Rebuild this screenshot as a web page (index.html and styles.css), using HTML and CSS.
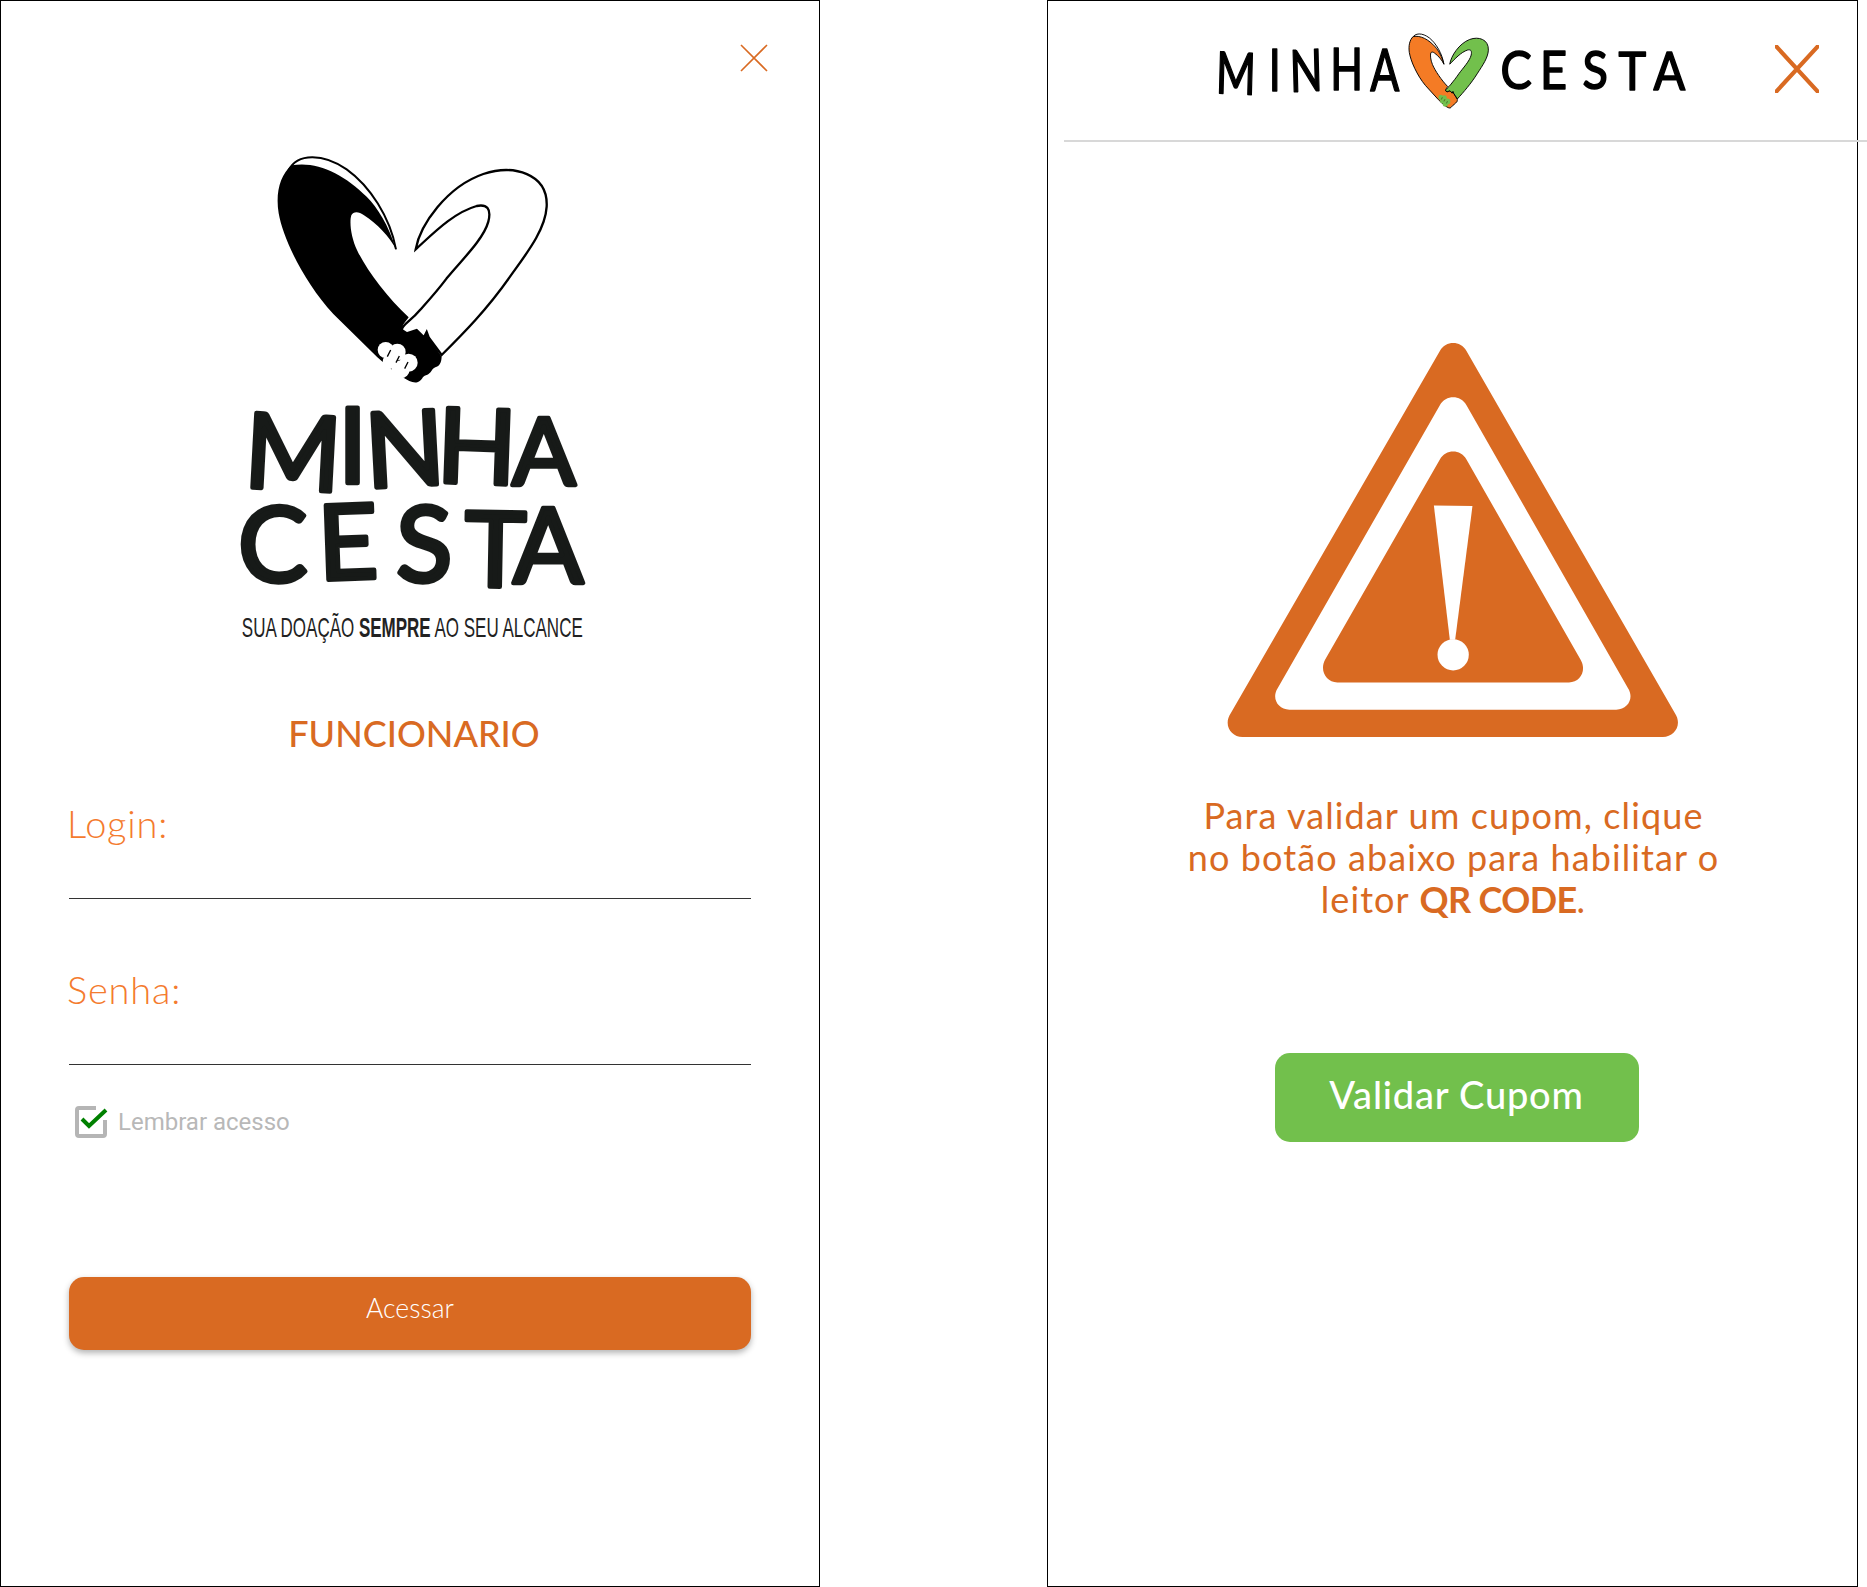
FILE: index.html
```html
<!DOCTYPE html>
<html lang="pt-BR">
<head>
    <meta charset="UTF-8">
    <meta name="viewport" content="width=device-width, initial-scale=1.0">
    <title>Minha Cesta</title>
    <link rel="stylesheet" href="styles.css">
</head>
<body>

<svg class="defs" width="0" height="0" aria-hidden="true">
    <defs>
        <symbol id="heart" viewBox="0 0 1200 840" preserveAspectRatio="none">
            <!-- outline above the left arm -->
            <path class="heart-line" d="M205 122 C232 68 310 70 380 118 C450 168 510 262 528 358"/>
            <!-- left arm -->
            <path class="heart-left" d="M528 358 C506 285 472 232 440 200 C372 132 290 92 215 106 C180 135 166 190 176 250 C190 330 255 460 340 552 L472 682 L510 715 L548 742 C565 752 578 760 592 757 C608 752 606 738 618 736 C636 730 634 716 646 712 C664 706 664 690 665 680 L626 622 L620 606 L612 622 L590 600 L560 610 L545 600 C546 586 556 576 566 562 C500 500 440 420 412 362 C392 320 388 275 394 256 C400 244 416 244 432 256 C470 280 510 322 528 358 Z"/>
            <!-- right arm -->
            <path class="heart-right" d="M587 358 C600 285 680 170 790 132 C880 102 985 130 980 230 C976 300 920 370 870 440 C800 540 730 610 665 675 L626 622 L620 606 L612 622 L590 600 L560 610 L545 600 C548 582 570 576 600 540 C625 512 650 485 680 445 C720 395 790 330 805 275 C815 235 800 222 770 228 C700 248 640 310 587 358 Z"/>
            <!-- fingers -->
            <g class="heart-fingers">
                <circle cx="497" cy="660" r="24"/>
                <circle cx="532" cy="666" r="25"/>
                <circle cx="566" cy="698" r="27"/>
                <circle cx="542" cy="718" r="27"/>
                <circle cx="510" cy="695" r="22"/>
            </g>
            <path class="heart-knuckle" d="M502 680 L512 660 M528 698 L538 678 M554 716 L564 696"/>
        </symbol>
        <symbol id="close" viewBox="0 0 28 28" preserveAspectRatio="none">
            <path d="M1 1 L27 27 M27 1 L1 27"/>
        </symbol>
    </defs>
</svg>

<!-- Tela de login -->
<section class="panel panel-login">
    <svg class="close-small"><use href="#close"/></svg>

    <svg class="logo-big" viewBox="0 0 400 520" role="img" aria-label="Minha Cesta">
        <use href="#heart" width="400" height="280"/>
        <text class="mark-big" x="23 118 147 216 292" y="357 353 358 352 355" rotate="3 0 -3 2 0">MINH<tspan class="mark-big-a">A</tspan></text>
        <text class="mark-big" x="18 99 176 244 293" y="452 450 452 456 453" rotate="0 -2 0 1 0">CESTA</text>
        <g transform="scale(.607 1)">
            <text class="slogan" x="36" y="507">SUA DOAÇÃO <tspan class="slogan-bold">SEMPRE</tspan> AO SEU ALCANCE</text>
        </g>
    </svg>

    <h2 class="title">FUNCIONARIO</h2>

    <form class="form">
        <div class="field">
            <label class="field-label" for="login">Login:</label>
            <input class="field-input" id="login" type="text">
        </div>
        <div class="field">
            <label class="field-label" for="senha">Senha:</label>
            <input class="field-input" id="senha" type="password">
        </div>
        <div class="remember">
            <svg class="remember-box" viewBox="0 0 34 34">
                <path class="remember-frame" d="M22 3 H5 Q3 3 3 5 V29 Q3 31 5 31 H29 Q31 31 31 29 V15"/>
                <path class="remember-check" d="M8 14 L15 21 L32 5"/>
            </svg>
            <span>Lembrar acesso</span>
        </div>
        <button class="btn-access" type="button">Acessar</button>
    </form>
</section>

<!-- Tela de validar cupom -->
<section class="panel panel-coupon">
    <header class="coupon-header">
        <svg class="logo-small" viewBox="0 0 470 76" role="img" aria-label="Minha Cesta">
            <g transform="scale(.74 1)">
                <text class="mark-small" x="-2 70 99 153 207" y="61 59 60 58 59" rotate="2 0 -2 0 0">MINHA</text>
            </g>
            <g transform="scale(.9 1)">
                <text class="mark-small mark-small-b" x="315 359 406 446 485" y="57 57 57 58 58">CESTA</text>
            </g>
            <use class="heart-color" href="#heart" x="175" y="-7" width="118" height="92"/>
        </svg>
        <svg class="close-large"><use href="#close"/></svg>
    </header>

    <div class="coupon-body">
        <svg class="warning" viewBox="52 38 1355 1184">
            <path class="warning-fill" d="M690 62 C708 30 752 30 770 62 L1396 1150 C1420 1185 1395 1222 1360 1222 L97 1222 C62 1222 38 1185 62 1150 Z"/>
            <path class="warning-gap" d="M690 225 C708 193 752 193 770 225 L1255 1075 C1275 1105 1255 1140 1220 1140 L238 1140 C203 1140 183 1105 203 1075 Z"/>
            <path class="warning-fill" d="M690 388 C708 356 752 356 770 388 L1113 990 C1132 1022 1112 1058 1078 1058 L382 1058 C348 1058 328 1022 345 990 Z"/>
            <path class="warning-gap" d="M672 526 L788 528 L736 930 L720 930 Z"/>
            <circle class="warning-gap" cx="730" cy="975" r="47"/>
        </svg>

        <p class="coupon-text">Para validar um cupom, clique<br>no botão abaixo para habilitar o<br>leitor <strong>QR CODE</strong>.</p>

        <button class="btn-validate" type="button">Validar Cupom</button>
    </div>
</section>

</body>
</html>
```

FILE: styles.css
```css
html, body {
    margin: 0;
    padding: 0;
    height: 100%;
    background-color: #ffffff;
}

body {
    display: flex;
    align-items: flex-start;
    gap: 227px;
    width: 1867px;
    height: 1587px;
    overflow: hidden;
    font-family: Lato, Arial, sans-serif;
    color: #d96a22;
}

.defs {
    position: absolute;
}

.panel {
    box-sizing: border-box;
    height: 1587px;
    border: 1px solid #000000;
    display: flex;
    flex-direction: column;
}

/* coracao do logo */
.heart-line {
    fill: none;
    stroke: #000000;
    stroke-width: var(--heart-stroke, 6);
}

.heart-left {
    fill: var(--arm-left, #000000);
    stroke: var(--arm-left-line, none);
    stroke-width: var(--heart-stroke, 6);
}

.heart-right {
    fill: var(--arm-right, #ffffff);
    stroke: #000000;
    stroke-width: var(--heart-stroke, 7);
}

.heart-fingers {
    fill: var(--fingers, #ffffff);
}

.heart-knuckle {
    fill: none;
    stroke: #000000;
    stroke-width: 4;
}

.heart-color {
    --arm-left: #f47b25;
    --arm-left-line: #000000;
    --arm-right: #72c04c;
    --fingers: #72c04c;
    --heart-stroke: 9;
}

/* tela de login */
.panel-login {
    width: 820px;
    padding: 0 68px;
}

.close-small {
    width: 28px;
    height: 28px;
    margin: 43px 0 0 671px;
    fill: none;
    stroke: #d96a22;
    stroke-width: 1.6;
    flex: none;
}

.logo-big {
    width: 400px;
    height: 520px;
    margin: 58px 0 0 151px;
    flex: none;
}

.mark-big {
    font-family: Lato, sans-serif;
    font-size: 104px;
    fill: #171a18;
    stroke: #171a18;
    stroke-width: 4.5;
    stroke-linejoin: round;
    stroke-linecap: round;
}

.mark-big-a {
    font-size: 94px;
}

.slogan {
    font-family: "Liberation Sans", sans-serif;
    font-size: 28px;
    fill: #222222;
}

.slogan-bold {
    font-weight: 700;
}

.title {
    margin: 63px 0 0;
    padding-left: 8px;
    font-size: 36px;
    line-height: 40px;
    font-weight: 500;
    text-align: center;
}

.field {
    display: flex;
    flex-direction: column;
    margin-bottom: 68px;
}

.form {
    margin-top: 48px;
    width: 682px;
}

.field-label {
    font-size: 38px;
    line-height: 44px;
    font-weight: 300;
    color: #f47b2e;
    margin-left: -2px;
    letter-spacing: 0.8px;
}

.field-input {
    box-sizing: border-box;
    height: 54px;
    border: none;
    border-bottom: 1.5px solid #333333;
    background: transparent;
    outline: none;
}

.remember {
    display: flex;
    align-items: center;
    gap: 10px;
    margin: -28px 0 0 5px;
    font-family: Roboto, sans-serif;
    font-size: 24px;
    color: #b8b8b8;
    height: 34px;
}

.remember-box {
    width: 34px;
    height: 34px;
}

.remember-frame {
    fill: none;
    stroke: #b5b5b5;
    stroke-width: 4;
}

.remember-check {
    fill: none;
    stroke: #008000;
    stroke-width: 4;
}

.btn-access {
    display: block;
    width: 682px;
    height: 73px;
    margin-top: 138px;
    padding: 0 0 11px;
    background-color: #d96a22;
    border: none;
    border-radius: 15px;
    box-shadow: 0 3px 6px rgba(0, 0, 0, 0.3);
    color: #ffffff;
    font-family: Lato, sans-serif;
    font-size: 26.5px;
    font-weight: 300;
}

/* tela de validar cupom */
.panel-coupon {
    width: 811px;
}

.coupon-header {
    display: flex;
    align-items: flex-start;
    flex: none;
    box-sizing: border-box;
    height: 141px;
    margin: 0 -11px 0 16px;
    border-bottom: 2px solid #d8d8d8;
}

.logo-small {
    width: 470px;
    height: 76px;
    margin: 31px 0 0 153px;
    flex: none;
    overflow: visible;
}

.mark-small {
    font-family: Lato, sans-serif;
    font-size: 58px;
    fill: #000000;
    stroke: #000000;
    stroke-width: 1.6;
    stroke-linejoin: round;
}

.mark-small-b {
    font-size: 52px;
}

.close-large {
    width: 44px;
    height: 48px;
    margin: 44px 0 0 88px;
    flex: none;
    fill: none;
    stroke: #d96a22;
    stroke-width: 2.6;
    stroke-linecap: round;
}

.coupon-body {
    display: flex;
    flex-direction: column;
    align-items: center;
}

.warning {
    width: 452px;
    height: 394px;
    margin-top: 201px;
}

.warning-fill {
    fill: #d96a22;
}

.warning-gap {
    fill: #ffffff;
}

.coupon-text {
    margin: 57px 0 0 2px;
    font-size: 36px;
    line-height: 42px;
    text-align: center;
    color: #d96a22;
    letter-spacing: 1.1px;
}

.coupon-text strong {
    letter-spacing: -0.6px;
}

.btn-validate {
    width: 364px;
    height: 89px;
    margin: 133px 0 0 8px;
    padding: 0 0 8px;
    background-color: #72c04c;
    border: none;
    border-radius: 15px;
    color: #ffffff;
    font-family: Lato, sans-serif;
    font-size: 38px;
    font-weight: 500;
    letter-spacing: 0.8px;
}
```
